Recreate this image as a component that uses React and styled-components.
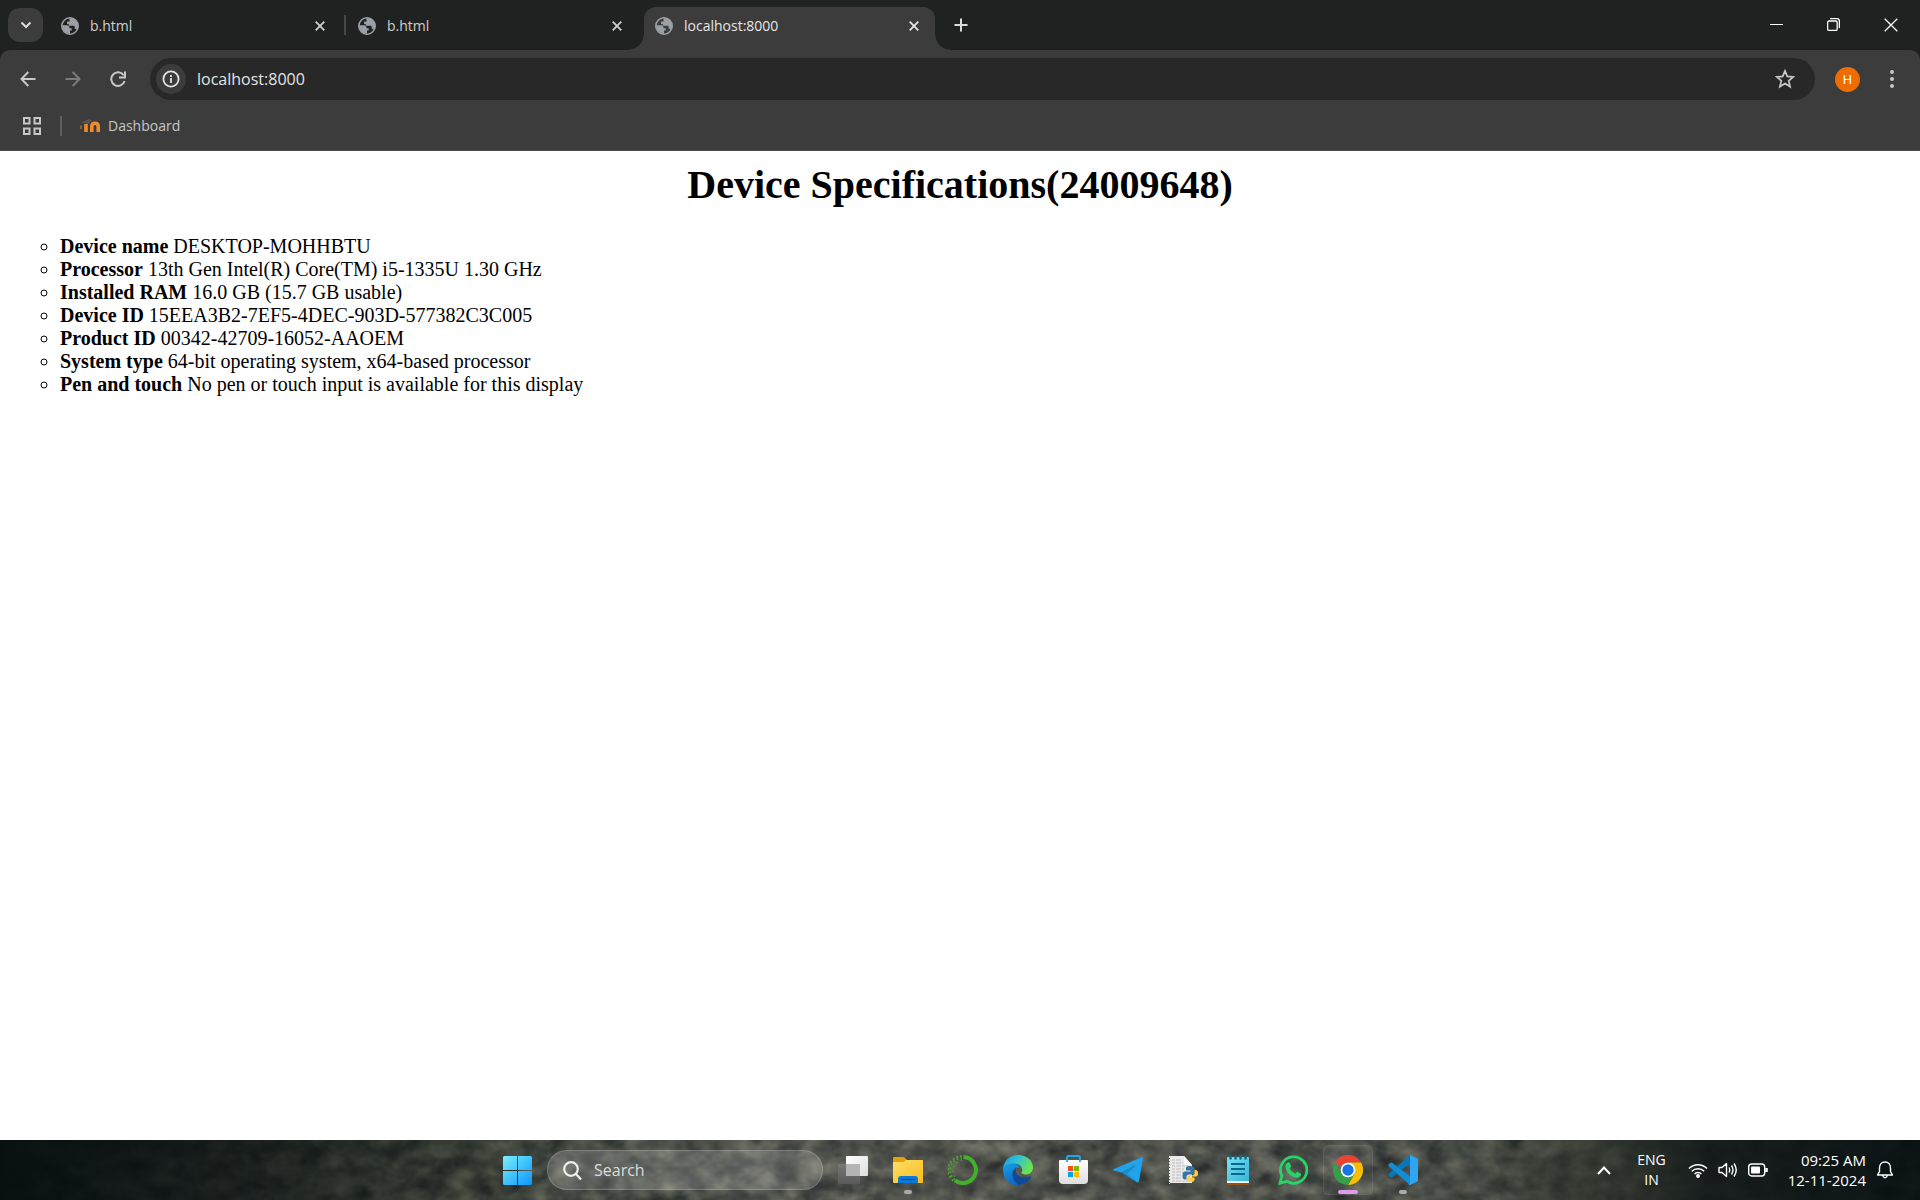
import React from "react";
import styled, { createGlobalStyle, css } from "styled-components";

const Global = createGlobalStyle`
  *, *::before, *::after { box-sizing: border-box; }
  html, body, #root { height: 100%; }
  body { margin: 0; background: #fff; font-family: "Open Sans", "Noto Sans", sans-serif; }
  button { border: 0; padding: 0; margin: 0; background: none; color: inherit; font: inherit; cursor: pointer; }
  svg { display: block; flex: none; }
`;

const Screen = styled.div`
  display: flex;
  flex-direction: column;
  min-height: 100vh;
`;

/* ---------- browser frame ---------- */

const TabStrip = styled.header`
  display: flex;
  height: 50px;
  padding-left: 8px;
  background: #202221;
  color: #dcdcdc;
`;

const TabSearch = styled.button`
  display: grid;
  place-items: center;
  width: 35px;
  height: 34px;
  margin: 8px 7px 0 0;
  border-radius: 12px;
  background: #3c3c3c;
`;

const Tabs = styled.div`
  display: flex;
  gap: 6px;
`;

const Tab = styled.div`
  position: relative;
  display: flex;
  align-items: center;
  width: 291px;
  height: 43px;
  margin-top: 7px;
  padding: 0 11px 6px 11px;
  border-radius: 12px 12px 0 0;
  color: ${(p) => (p.$active ? "#e6e6e6" : "#cfcfcf")};
  ${(p) =>
    p.$active &&
    css`
      background: #3c3c3c;
      &::before,
      &::after {
        content: "";
        position: absolute;
        bottom: 0;
        width: 15px;
        height: 15px;
      }
      &::before {
        right: 100%;
        background: radial-gradient(circle at 0 0, transparent 14px, #3c3c3c 15px);
      }
      &::after {
        left: 100%;
        background: radial-gradient(circle at 100% 0, transparent 14px, #3c3c3c 15px);
      }
    `}
  ${(p) =>
    p.$divided &&
    css`
      &::after {
        content: "";
        position: absolute;
        right: -5px;
        top: 8px;
        width: 2px;
        height: 20px;
        background: #454746;
      }
    `}
`;

const TabTitle = styled.button`
  display: flex;
  flex: 1;
  align-items: center;
  gap: 11px;
  height: 36px;
  font-size: 14px;
  line-height: 20px;
`;

const IconButton = styled.button`
  display: grid;
  place-items: center;
  width: ${(p) => p.$w || 20}px;
  height: ${(p) => p.$h || 20}px;
  flex: none;
`;

const NewTab = styled(IconButton)`
  margin: 7px 0 0 8px;
`;

const WindowControls = styled.div`
  display: flex;
  margin-left: auto;
`;

const ToolbarBack = styled.div`
  background: #202221;
`;

const Toolbar = styled.div`
  height: 101px;
  border-radius: 10px 10px 0 0;
  background: #3c3c3c;
  border-bottom: 1px solid #474747;
  color: #c7c7c7;
`;

const NavRow = styled.nav`
  display: flex;
  align-items: center;
  height: 58px;
  padding: 0 8px 0 5px;
`;

const AddressBar = styled.div`
  display: flex;
  flex: 1;
  align-items: center;
  height: 42px;
  margin: 0 20px 0 10px;
  padding: 0 20px 0 6px;
  border-radius: 21px;
  background: #282828;
`;

const SiteInfo = styled(IconButton)`
  border-radius: 50%;
  background: #3c3c3c;
  color: #e3e3e3;
  margin-right: 11px;
`;

const Address = styled.input`
  flex: 1;
  min-width: 0;
  border: 0;
  padding: 0;
  outline: 0;
  background: none;
  color: #e4e4e4;
  font: 16px/24px "Open Sans", "Noto Sans", sans-serif;
`;

const Avatar = styled.button`
  width: 25px;
  height: 25px;
  margin-right: 12px;
  border-radius: 50%;
  background: #ef6c00;
  color: #fff;
  font: 13px/25px Roboto, sans-serif;
`;

const Bookmarks = styled.div`
  display: flex;
  align-items: center;
  height: 35px;
  padding-left: 20px;
`;

const BookmarkDivider = styled.span`
  width: 2px;
  height: 20px;
  margin: 0 18px 0 16px;
  background: #5e5e5e;
`;

const Bookmark = styled.a`
  display: flex;
  align-items: center;
  gap: 8px;
  color: #c7c7c7;
  font-size: 14px;
  line-height: 20px;
  text-decoration: none;
`;

/* ---------- document ---------- */

const Page = styled.main`
  flex: 1;
  padding: 10px;
  color: #000;
  font: 20px/23px "Liberation Serif", "Times New Roman", serif;
`;

const Title = styled.h1`
  margin: 0 0 26px;
  font-size: 40px;
  line-height: 48px;
  text-align: center;
`;

const Specs = styled.ul`
  margin: 0;
  padding-left: 50px;
  list-style: circle;
`;

/* ---------- taskbar ---------- */

const Taskbar = styled.footer`
  position: relative;
  display: grid;
  grid-template-columns: 1fr auto 1fr;
  height: 60px;
  overflow: hidden;
  background: linear-gradient(90deg, #060e0e 0, #141a19 13%, #293029 24%, #404640 30%, #50534e 40%, #4c504b 62%, #444945 74%, #33372f 82%, #151c1b 89%, #081012 100%);
  color: #fff;
`;

const Wallpaper = styled.svg`
  position: absolute;
  inset: 0;
  width: 100%;
  height: 100%;
`;

const Apps = styled.div`
  position: relative;
  grid-column: 2;
  display: flex;
  align-items: center;
  gap: 5px;
`;

const AppButton = styled.button`
  position: relative;
  display: grid;
  place-items: center;
  width: 50px;
  height: 50px;
  border: 1px solid ${(p) => (p.$active ? "#ffffff10" : "transparent")};
  border-radius: 6px;
  background: ${(p) => (p.$active ? "#ffffff0c" : "none")};
  ${(p) =>
    p.$running &&
    css`
      &::after {
        content: "";
        position: absolute;
        left: 50%;
        bottom: 0;
        width: ${p.$active ? 20 : 8}px;
        height: 4px;
        border-radius: 2px;
        background: ${p.$active ? "#dc9be6" : "#a9aba9"};
        transform: translateX(-50%);
      }
    `}
`;

const SearchBox = styled.label`
  display: flex;
  align-items: center;
  gap: 12px;
  width: 276px;
  height: 40px;
  padding-left: 15px;
  border: 1px solid #ffffff30;
  border-radius: 20px;
  background: #ffffff26;
  color: #f0f0f0;
`;

const SearchInput = styled.input`
  flex: 1;
  min-width: 0;
  padding: 0;
  border: 0;
  outline: 0;
  background: none;
  font: 16px/24px "Open Sans", "Noto Sans", sans-serif;
  &::placeholder { color: #dcdcdc; opacity: 1; }
`;

const Tray = styled.div`
  position: relative;
  display: flex;
  align-items: center;
  justify-content: flex-end;
  padding-right: 25px;
`;

const TrayText = styled.button`
  font-size: ${(p) => p.$size || 15}px;
  line-height: 20px;
  text-align: ${(p) => p.$align || "center"};
`;

const Status = styled.button`
  display: flex;
  gap: 10px;
  margin: 0 20px 0 22px;
`;

const Language = styled(TrayText)`
  margin-left: 23px;
`;

const Bell = styled(IconButton)`
  margin-left: 9px;
`;

/* ---------- drawings ---------- */

const Line = ({ w = 20, h = w, box, sw = 2, children, ...rest }) => (
  <svg width={w} height={h} viewBox={box || `0 0 ${w} ${h}`} fill="none" stroke="currentColor" strokeWidth={sw} {...rest}>
    {children}
  </svg>
);

const Globe = () => (
  <svg width="18" height="18" viewBox="0 0 18 18">
    <circle cx="9" cy="9" r="8.2" fill="none" stroke="#9aa0a6" strokeWidth="1.6" />
    <path fill="#9aa0a6" d="M8.800 1C14 1 17 4.700 17 9c0 1.500-.4 2.900-1 4-.5-1-1.300-1.300-2.300-1.300V10c0-.8-.5-1.200-1.300-1.200H8V7.200h-.9c-.8 0-1.200-.5-1.200-1.200 0-.9.6-1.400 1.400-1.400H8.500V3.200c0-1-.2-1.500.3-2.200z" />
    <path fill="#9aa0a6" d="M1.200 8.300h5.200c1.200 0 2 .9 2 1.900v1h2.300v2.200H9v3.400C4.500 16.700 1 13 1.200 8.300z" />
  </svg>
);

const Cross = () => <Line w={10} sw={1.8}><path d="M.7.7 9.300 9.300M9.300.7.7 9.300" /></Line>;

const WindowsLogo = () => (
  <svg width="29" height="29" viewBox="0 0 29 29">
    <defs>
      <linearGradient id="win" x1="0" y1="0" x2="29" y2="29" gradientUnits="userSpaceOnUse">
        <stop offset="0" stopColor="#7cf0ff" /><stop offset=".5" stopColor="#41c3fb" /><stop offset="1" stopColor="#0e95fb" />
      </linearGradient>
    </defs>
    <path fill="url(#win)" d="M1 0h13v14H0V1zM15 0h13l1 1v13H15zM0 15h14v14H1l-1-1zM15 15h14v13l-1 1H15z" />
  </svg>
);

const TaskView = () => (
  <svg width="30" height="28" viewBox="0 0 30 28">
    <defs>
      <linearGradient id="tv" x1="0" y1="0" x2="0" y2="1"><stop stopColor="#777" /><stop offset="1" stopColor="#5a5a5a" /></linearGradient>
      <linearGradient id="tw" x1="0" y1="0" x2="1" y2="1"><stop stopColor="#fff" /><stop offset="1" stopColor="#ddd" /></linearGradient>
    </defs>
    <rect x="0" y="8" width="22" height="20" rx="1" fill="url(#tv)" />
    <rect x="8" y="0" width="22" height="20" rx="1" fill="url(#tw)" />
    <path fill="#b4b4b4" d="M8 8h14v12H9l-1-1z" />
  </svg>
);

const Explorer = () => (
  <svg width="30" height="27" viewBox="0 0 30 27">
    <defs><linearGradient id="fx" x1="0" y1="0" x2="1" y2="1"><stop stopColor="#ffdf6b" /><stop offset="1" stopColor="#fbbc1c" /></linearGradient></defs>
    <path fill="#e3a008" d="M0 1q0-1 1-1h9q1 0 2 1l2 2h15q1 0 1 1v6H0z" />
    <path fill="url(#fx)" d="M0 5h10q1 0 2-1l1-1h16q1 0 1 1v21q0 1-1 1H1q-1 0-1-1z" />
    <path fill="#0f78d4" d="M5 26v-4q0-3 3-3h14q3 0 3 3v4z" />
    <path stroke="#0a4a8f" strokeWidth="1" d="M8 22.500h14" />
  </svg>
);

const Anaconda = () => (
  <svg width="30" height="30" viewBox="0 0 30 30" fill="none" stroke="#43b02a">
    <path strokeWidth="4" d="M15.500 2a13 13 0 1 1-8.500 23.300" />
    <path strokeWidth="1.600" strokeDasharray="2 2" d="M14 1A14 14 0 0 0 7 27" />
    <path strokeWidth="1.600" strokeDasharray="1.500 2.500" d="M14 3A12 12 0 0 0 7.500 25" />
    <path strokeWidth="1.500" strokeDasharray="1 4" d="M14 5A10.500 10.500 0 0 0 8.500 23" />
  </svg>
);

const Edge = () => (
  <svg width="30" height="30" viewBox="0 0 30 30">
    <defs>
      <linearGradient id="e1" x1="0" y1="0" x2="1" y2=".45"><stop stopColor="#1697e0" /><stop offset=".5" stopColor="#31c3d5" /><stop offset="1" stopColor="#6be34d" /></linearGradient>
      <linearGradient id="e2" x1="0" y1="0" x2=".6" y2="1"><stop stopColor="#1aa0e8" /><stop offset="1" stopColor="#0c62bd" /></linearGradient>
    </defs>
    <path fill="url(#e2)" d="M.2 13C1 8 6 7.500 9 8c5 .6 8 3 8 6-1-1.500-4-2-5 1-1.500 6 4 11 13 8.500C22 28.500 18 30 14 30 5 30-.8 21.500.2 13z" />
    <path fill="#104a97" d="M13 12.500C7 17 9 26 15.500 29.500 20.500 29.500 26 27 28 22.200c.3-.8-.3-1.200-1-.8C19.500 25 12 20.500 12.500 14z" />
    <path fill="url(#e1)" d="M.2 13C1 5.500 7 0 15 0c9 0 15 6 15 12.200C30 17 26.500 19.500 23 19.500c-3 0-5.500-1-4.200-2.700C20 15.500 19.500 8.500 10 8.500 5.500 8.500 1.500 10 .2 13z" />
  </svg>
);

const Store = () => (
  <svg width="29" height="30" viewBox="0 0 29 30">
    <defs><linearGradient id="st" x1="0" y1="0" x2="0" y2="1"><stop stopColor="#fff" /><stop offset="1" stopColor="#dedede" /></linearGradient></defs>
    <path fill="url(#st)" d="M0 6q0-1 1-1h27q1 0 1 1v19q0 4-4 4H4q-4 0-4-4z" />
    <path fill="none" stroke="#1fa8e8" strokeWidth="1.800" d="M8 7V2.500Q8 1 9.500 1h10Q21 1 21 2.500V7" />
    <path fill="#f25022" d="M9 11h5v5H9z" /><path fill="#7fba00" d="M15 11h5v5h-5z" />
    <path fill="#00a4ef" d="M9 17h5v5H9z" /><path fill="#ffb900" d="M15 17h5v5h-5z" />
  </svg>
);

const Telegram = () => (
  <svg width="30" height="26" viewBox="0 0 30 26">
    <path fill="#20a3ea" d="M.8 12 28.500.3Q30.200-.2 30 1.600L26 24q-.5 2.400-2.600 1l-10-8L23 8 8.700 15.500.7 13.500q-1.200-.8.1-1.500z" />
    <path fill="#1590d8" d="M8.700 15.500 23 8 13.400 17l10 8-10-6.500z" />
  </svg>
);

const PythonFile = () => (
  <svg width="29" height="30" viewBox="0 0 29 30">
    <path fill="#e9e9e9" d="M1 1h14l8 9v18H1z" />
    <path fill="#fafafa" d="M15 1v9h8z" />
    <path stroke="#bdbdbd" strokeWidth="1" strokeDasharray="3 1 5 1" d="M3 5h10M3 8h11M3 11h16M3 14h12M3 17h11M3 20h10M3 23h14M3 26h17" />
    <path stroke="#f4f4f4" strokeDasharray="2 1" d="M.5 1v28" />
    <path fill="#3672a4" d="M21 11c-4 0-4 1.500-4 3v1.500h4.500v1H16c-2 0-2.500 2-2.500 4s.7 4 2.500 4h1.500V22c0-1.500 1-2.500 2.500-2.500h3.500c1 0 2-1 2-2V14c0-2-2-3-4.500-3z" />
    <path fill="#ffcf3e" d="M21.500 27c4 0 4-1.500 4-3v-1.500H21v-1h5.500c2 0 2.500-1 2.500-3s-.7-3.500-2.500-3.500h-1V18c0 1.500-1 2.500-2.500 2.500h-3c-1 0-2 1-2 2V24c0 2 1 3 3.500 3z" />
  </svg>
);

const Notepad = () => (
  <svg width="22" height="30" viewBox="0 0 22 30">
    <defs><linearGradient id="np" x1="0" y1="0" x2="1" y2="1"><stop stopColor="#7fe0f2" /><stop offset="1" stopColor="#35b5da" /></linearGradient></defs>
    <path fill="#9a4f12" d="M0 26h22v3q0 1-1 1H1q-1 0-1-1z" />
    <path fill="#f4f4f4" d="M0 25h22v3H0z" />
    <path fill="url(#np)" d="M0 3q0-1 1-1h20q1 0 1 1v23H0z" />
    <path stroke="#0b6e8c" strokeWidth="2.500" strokeLinecap="round" d="M3.500 1.500v2M8.500 1.500v2M13.500 1.500v2M18.500 1.500v2" />
    <path stroke="#08698c" strokeWidth="2" d="M4 9h14M4 14h14M4 19h14" />
  </svg>
);

const WhatsApp = () => (
  <svg width="30" height="30" viewBox="0 0 30 30">
    <path fill="none" stroke="#25d366" strokeWidth="2.800" d="M2 28.200 3.900 21A13.200 13.200 0 1 1 8.800 26.300z" />
    <path fill="#25d366" d="M10 7.500c.7-.3 1.500-.2 1.900.7l1.100 2.700c.2.600-.2 1.200-1.400 2.500 1.300 2.600 3.200 4.200 5.800 5.300 1.300-1.600 1.700-2.100 2.300-1.800l2.900 1.500c.7.400.5 1.200.2 2-.8 1.900-3.200 2.700-5 2.300C12.500 21.500 7.500 16.400 7.500 11.500 7.500 10 8.500 8.200 10 7.500z" />
  </svg>
);

const Chrome = () => (
  <svg width="30" height="30" viewBox="0 0 30 30">
    <path fill="#ea4335" d="M15 15 2 7.500A15 15 0 0 1 28 7.500H15z" />
    <path fill="#fbbc04" d="M15 7.500H28A15 15 0 0 1 15 30L21.500 18.800z" />
    <path fill="#34a048" d="M2 7.500A15 15 0 0 0 15 30l6.500-11.200L15 15 8.500 18.800z" />
    <circle cx="15" cy="15" r="7.300" fill="#fff" /><circle cx="15" cy="15" r="5.700" fill="#1a73e8" />
  </svg>
);

const Code = () => (
  <svg width="30" height="30" viewBox="0 0 30 30">
    <path fill="#0877b9" d="M22 0 .6 19q-.8.800 0 1.500l2 1.800q.7.600 1.500 0L22 8.500z" />
    <path fill="#0f8fd8" d="M22 30 .6 11q-.8-.8 0-1.500l2-1.800q.7-.6 1.500 0L22 21.500z" />
    <path fill="#2ea4f4" d="M22 0l7 3.200q1 .5 1 1.500v20.600q0 1-1 1.500L22 30q-1 .2-1.500-.5L22 28z" />
  </svg>
);

const APPS = [
  ["Task view", TaskView], ["File Explorer", Explorer, "running"], ["Anaconda", Anaconda],
  ["Microsoft Edge", Edge], ["Microsoft Store", Store], ["Telegram", Telegram],
  ["Python file", PythonFile], ["Notepad", Notepad], ["WhatsApp", WhatsApp],
  ["Google Chrome", Chrome, "active"], ["Visual Studio Code", Code, "running"],
];

const TABS = ["b.html", "b.html", "localhost:8000"];

const SPECS = [
  ["Device name", "DESKTOP-MOHHBTU"],
  ["Processor", "13th Gen Intel(R) Core(TM) i5-1335U 1.30 GHz"],
  ["Installed RAM", "16.0 GB (15.7 GB usable)"],
  ["Device ID", "15EEA3B2-7EF5-4DEC-903D-577382C3C005"],
  ["Product ID", "00342-42709-16052-AAOEM"],
  ["System type", "64-bit operating system, x64-based processor"],
  ["Pen and touch", "No pen or touch input is available for this display"],
];

export default function App() {
  return (
    <Screen>
      <Global />
      <TabStrip>
        <TabSearch aria-label="Search tabs"><Line w={12} h={8}><path d="m1.500 1.500 4.500 4.500 4.500-4.500" /></Line></TabSearch>
        <Tabs>
          {TABS.map((title, i) => (
            <Tab key={i} $active={i === 2} $divided={i === 0}>
              <TabTitle><Globe />{title}</TabTitle>
              <IconButton aria-label="Close tab"><Cross /></IconButton>
            </Tab>
          ))}
        </Tabs>
        <NewTab $w={36} $h={36} aria-label="New tab"><Line w={14}><path d="M7 .5v13M.5 7h13" /></Line></NewTab>
        <WindowControls>
          <IconButton $w={56} $h={49} aria-label="Minimize"><Line w={13} sw={1}><path stroke="#fff" d="M0 6.500h13" /></Line></IconButton>
          <IconButton $w={58} $h={49} aria-label="Restore">
            <Line w={13} sw={1.300} stroke="#fff"><rect x=".6" y="3" width="9.600" height="9.400" rx="1.500" /><path d="M3 .7h7q2.400 0 2.400 2.400V10" /></Line>
          </IconButton>
          <IconButton $w={58} $h={49} aria-label="Close"><Line w={14} sw={1.300} stroke="#fff"><path d="m.7.7 12.600 12.600M13.300.7.7 13.300" /></Line></IconButton>
        </WindowControls>
      </TabStrip>
      <ToolbarBack>
        <Toolbar>
          <NavRow>
            <IconButton $w={45} $h={40} aria-label="Back"><Line w={16}><path d="M15.500 8H2M8.300 1 1.500 8l6.800 7" /></Line></IconButton>
            <IconButton $w={45} $h={40} aria-label="Forward" disabled><Line w={16} stroke="#7b7b7b"><path d="M.5 8H14M7.700 1l6.800 7-6.800 7" /></Line></IconButton>
            <IconButton $w={45} $h={40} aria-label="Reload"><Line w={16}><path d="M13.700 4.300A6.800 6.800 0 1 0 14.600 10M15 .5v6H9" /></Line></IconButton>
            <AddressBar>
              <SiteInfo $w={30} $h={30} aria-label="Site information">
                <Line w={18} sw={1.800}><circle cx="9" cy="9" r="7.600" /><path d="M9 8v5M9 5v2" /></Line>
              </SiteInfo>
              <Address aria-label="Address" defaultValue="localhost:8000" />
              <IconButton aria-label="Bookmark this tab">
                <Line w={20} sw={1.700}><path d="m10 1.900 2.300 5.500 5.900.5-4.500 3.900 1.400 5.800L10 14.500l-5.100 3.100 1.400-5.800L1.800 7.900l5.900-.5z" /></Line>
              </IconButton>
            </AddressBar>
            <Avatar aria-label="Profile">H</Avatar>
            <IconButton $w={40} $h={40} aria-label="Menu">
              <Line w={4} h={18} stroke="none" fill="#c7c7c7"><circle cx="2" cy="2" r="2" /><circle cx="2" cy="9" r="2" /><circle cx="2" cy="16" r="2" /></Line>
            </IconButton>
          </NavRow>
          <Bookmarks>
            <IconButton $w={24} $h={24} aria-label="Apps">
              <Line w={18}><path d="M1 1h5.500v5.500H1zM11.500 1H17v5.500h-5.500zM1 11.500h5.500V17H1zM11.500 11.500H17V17h-5.500z" /></Line>
            </IconButton>
            <BookmarkDivider />
            <Bookmark href="#dashboard">
              <svg width="20" height="14" viewBox="0 0 20 14" fill="none">
                <path stroke="#ef8a2d" strokeWidth="3.600" d="M6 13V5M11.800 13V7.500q0-3.300 3.200-3.300t3.200 3.300V13" />
                <path stroke="#a5683f" strokeWidth="1.500" d="M1 10V6.500" />
                <path fill="#5b5352" d="m0 4 9-4 3 1.500L8 5 4 4z" />
              </svg>
              Dashboard
            </Bookmark>
          </Bookmarks>
        </Toolbar>
      </ToolbarBack>
      <Page>
        <Title>Device Specifications(24009648)</Title>
        <Specs>
          {SPECS.map(([name, value]) => <li key={name}><b>{name}</b> {value}</li>)}
        </Specs>
      </Page>
      <Taskbar>
        <Wallpaper aria-hidden="true">
          <defs>
            <filter id="rock" x="0" y="0" width="100%" height="100%" colorInterpolationFilters="sRGB">
              <feTurbulence type="fractalNoise" baseFrequency=".04 .055" numOctaves="3" seed="8" />
              <feColorMatrix values=".8 .5 0 0 -.33  .75 .5 0 0 -.3  .6 .45 0 0 -.23  0 0 0 0 1" />
            </filter>
            <linearGradient id="fade"><stop stopColor="#fff" stopOpacity=".03" /><stop offset=".12" stopColor="#fff" stopOpacity=".1" /><stop offset=".3" stopColor="#fff" stopOpacity=".4" /><stop offset=".72" stopColor="#fff" stopOpacity=".45" /><stop offset=".88" stopColor="#fff" stopOpacity=".05" /></linearGradient>
            <mask id="light"><rect width="100%" height="100%" fill="url(#fade)" /></mask>
          </defs>
          <g mask="url(#light)"><rect width="100%" height="100%" filter="url(#rock)" /></g>
        </Wallpaper>
        <Apps>
          <AppButton aria-label="Start"><WindowsLogo /></AppButton>
          <SearchBox>
            <Line w={19} sw={2.200}><circle cx="8" cy="8" r="6.800" /><path d="m13 13 5 5.500" /></Line>
            <SearchInput type="search" placeholder="Search" aria-label="Search" />
          </SearchBox>
          {APPS.map(([name, Icon, state]) => (
            <AppButton key={name} aria-label={name} $running={!!state} $active={state === "active"}><Icon /></AppButton>
          ))}
        </Apps>
        <Tray>
          <IconButton aria-label="Show hidden icons"><Line w={14} h={9}><path d="M1 8l6-6.500L13 8" /></Line></IconButton>
          <Language $size={14}>ENG<br />IN</Language>
          <Status aria-label="Network, volume and battery">
            <Line w={20} sw={1.500}>
              <path d="M1 8.500a12.500 12.500 0 0 1 18 0M3.800 11.300a8.600 8.600 0 0 1 12.400 0M6.600 14a4.700 4.700 0 0 1 6.800 0" /><circle cx="10" cy="16" r="1.200" fill="#fff" />
            </Line>
            <Line w={20} sw={1.400}>
              <path strokeLinejoin="round" d="M1 7.500h3L8.500 3.500v13L4 12.500H1z" /><path d="M11 7.500q1.500 2.500 0 5M13.500 5.500q3 4.500 0 9M16 3.500q4.500 6.500 0 13" />
            </Line>
            <Line w={20} sw={1.400}>
              <rect x=".7" y="4" width="16" height="12" rx="3" /><path d="M18.500 8v4" strokeWidth="2.500" /><rect x="3" y="6.500" width="9" height="7" rx="1" fill="#fff" stroke="none" />
            </Line>
          </Status>
          <TrayText $align="right">09:25 AM<br />12-11-2024</TrayText>
          <Bell aria-label="Notifications">
            <Line w={18} sw={1.400}><path strokeLinejoin="round" d="M9 1C5.500 1 3.500 3.700 3.500 7v3.500L1.500 14h15l-2-3.500V7C14.500 3.700 12.500 1 9 1zM6.500 14.500q2.500 4.500 5 0" /></Line>
          </Bell>
        </Tray>
      </Taskbar>
    </Screen>
  );
}
